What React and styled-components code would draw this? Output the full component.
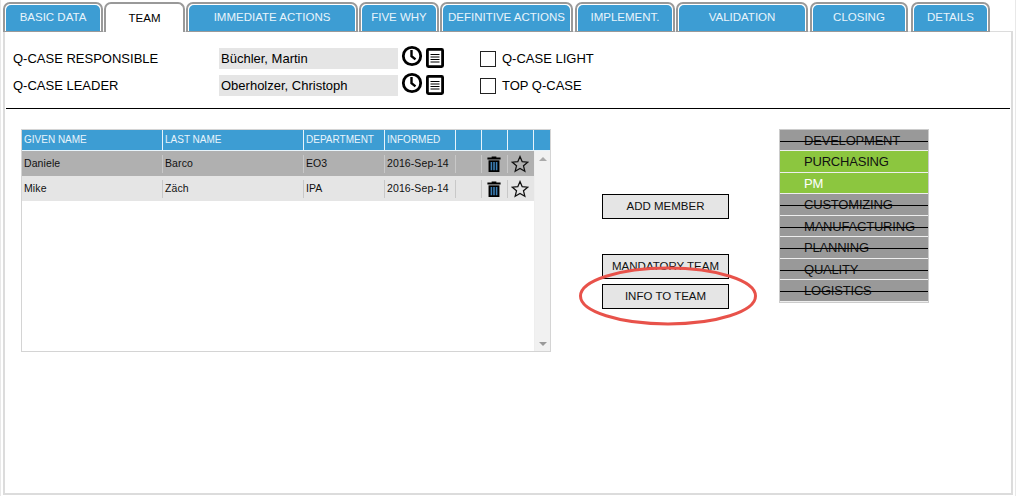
import React from "react";
import styled, { createGlobalStyle } from "styled-components";

const Global = createGlobalStyle`
  html, body { margin: 0; padding: 0; background: #fff; }
  * { box-sizing: border-box; }
  body { font-family: "Liberation Sans", Arial, sans-serif; color: #000; }
`;

const Page = styled.div`
  width: 1016px;
  height: 496px;
  padding: 2px 2px 1px 2px;
  border-left: 1px solid #e8e8e8;
  border-right: 1px solid #e8e8e8;
  display: flex;
  flex-direction: column;
  overflow: hidden;
`;

const TabStrip = styled.div`
  display: flex;
  height: 30px;
  flex: none;
  position: relative;
  z-index: 1;
`;

const Tab = styled.div`
  width: ${(p) => p.$w}px;
  margin-right: ${(p) => p.$gap}px;
  height: 30px;
  border: 2px solid #999;
  border-bottom: ${(p) => (p.$active ? "none" : "1px solid #999")};
  border-radius: 7px 7px 0 0;
  padding: 1px 1px 0;
  background: #fff;
  display: flex;
`;

const TabFace = styled.div`
  flex: 1;
  border-radius: 5px 5px 0 0;
  background: ${(p) => (p.$active ? "#fff" : "#3d9dd3")};
  color: ${(p) => (p.$active ? "#000" : "#e8f4fb")};
  font-size: 11.5px;
  display: flex;
  align-items: center;
  justify-content: center;
  white-space: nowrap;
  padding-bottom: 2px;
`;

const Panel = styled.div`
  flex: 1;
  margin-top: -1px;
  border: 2px solid #dcdcdc;
  border-top: 1px solid #dcdcdc;
  padding: 16px 1px 0 1px;
  display: flex;
  flex-direction: column;
`;

const CaseHeader = styled.div`
  display: flex;
  flex-direction: column;
  gap: 6px;
  padding-left: 7px;
  height: 60px;
`;

const CaseRow = styled.div`
  display: flex;
  align-items: center;
  height: 21px;
`;

const CaseLabel = styled.div`
  width: 206px;
  font-size: 13px;
  white-space: nowrap;
`;

const ReadOnlyField = styled.div`
  width: 179px;
  height: 21px;
  background: #e5e5e5;
  font-size: 13px;
  line-height: 22px;
  padding-left: 2px;
  white-space: nowrap;
`;

const IconSlot = styled.div`
  display: flex;
  align-items: flex-start;
  gap: 3px;
  margin-left: 3px;
  height: 21px;
  margin-top: -6px;
`;

const CheckGroup = styled.div`
  display: flex;
  align-items: center;
  margin-left: 36px;
  font-size: 13px;
  gap: 6px;
  white-space: nowrap;
`;

const CheckBox = styled.span`
  width: 16px;
  height: 16px;
  border: 1px solid #222;
  background: #fff;
  display: block;
`;

const Rule = styled.div`
  height: 1px;
  background: #000;
`;

const Workspace = styled.div`
  display: flex;
  align-items: flex-start;
  padding: 20px 0 0 15px;
`;

const TableBox = styled.div`
  width: 530px;
  height: 223px;
  border: 1px solid #d4d4d4;
  display: flex;
  flex-direction: column;
  font-size: 10.5px;
`;

const HeadRow = styled.div`
  display: grid;
  grid-template-columns: 141px 141px 81px 71px 26px 26px 26px 1fr;
  height: 21px;
  background: #3d9dd3;
  border-bottom: 1px solid #e8f4fb;
  flex: none;
`;

const HeadCell = styled.div`
  color: #e8f4fb;
  font-size: 10px;
  line-height: 19px;
  padding-left: 2px;
  border-right: 1px solid #e8f4fb;
  white-space: nowrap;
  &:last-child { border-right: none; }
`;

const TableBody = styled.div`
  flex: 1;
  display: flex;
`;

const Rows = styled.div`
  flex: 1;
  display: flex;
  flex-direction: column;
`;

const DataRow = styled.div`
  display: grid;
  grid-template-columns: 141px 141px 81px 71px 26px 26px 26px;
  height: 25px;
  background: ${(p) => (p.$selected ? "#b0b0b0" : "#e5e5e5")};
  align-items: center;
`;

const DataCell = styled.div`
  height: 18px;
  padding: ${(p) => (p.$icon ? "0 1px 0 0" : "0 0 1px 2px")};
  border-right: 1px solid #c8c8c8;
  color: #111;
  letter-spacing: 0.1px;
  white-space: nowrap;
  display: flex;
  align-items: center;
  justify-content: ${(p) => (p.$icon ? "center" : "flex-start")};
  &:last-child { border-right: none; padding-right: 3px; }
`;

const ScrollTrack = styled.div`
  width: 16px;
  background: #f1f1f1;
  border-left: 1px solid #eee;
  display: flex;
  flex-direction: column;
  justify-content: space-between;
  align-items: center;
  padding: 6px 0 5px;
`;

const ScrollArrow = styled.span`
  width: 0;
  height: 0;
  border-left: 4px solid transparent;
  border-right: 4px solid transparent;
  ${(p) => (p.$down ? "border-top: 4px solid #999;" : "border-bottom: 4px solid #aaa;")}
`;

const Actions = styled.div`
  width: 127px;
  margin-left: 51px;
  margin-top: 65px;
  display: flex;
  flex-direction: column;
  position: relative;
`;

const ActionButton = styled.button`
  width: 127px;
  height: 25px;
  margin-top: ${(p) => p.$top || 0}px;
  padding: 0 0 1px;
  border: 1px solid #000;
  border-radius: 0;
  background: #e5e5e5;
  color: #111;
  font: 11.5px "Liberation Sans", Arial, sans-serif;
  white-space: nowrap;
`;

const Highlight = styled.svg`
  position: absolute;
  left: -24px;
  top: 71px;
  pointer-events: none;
`;

const FunctionList = styled.div`
  width: 150px;
  height: 174px;
  margin-left: 50px;
  border: 1px solid #ccc;
  background: #eee;
  display: grid;
  grid-template-rows: repeat(8, 1fr);
  gap: 1px;
  padding-bottom: 1.5px;
`;

const FunctionItem = styled.div`
  position: relative;
  min-height: 0;
  background: ${(p) => (p.$on ? "#8cc63f" : "#999")};
  color: ${(p) => (p.$white ? "#fff" : "#111")};
  font-size: 13px;
  letter-spacing: -0.2px;
  line-height: 21px;
  padding-left: 24px;
  white-space: nowrap;
  ${(p) =>
    p.$off
      ? `&::after { content: ""; position: absolute; left: 0; right: 0; top: 11px; height: 1px; background: #000; }`
      : ""}
`;

const Clock = () => (
  <svg width="22" height="22" viewBox="0 0 22 22">
    <circle cx="11" cy="11" r="8.7" fill="#fff" stroke="#000" strokeWidth="2.8" />
    <path d="M10.5 5v6.2l4 3.2" fill="none" stroke="#000" strokeWidth="2.4" />
  </svg>
);

const Doc = () => (
  <svg width="18" height="20" viewBox="0 0 18 20" style={{ marginTop: 3 }}>
    <rect x="1.4" y="1.4" width="15.2" height="17.2" rx="1" fill="#fff" stroke="#000" strokeWidth="2.8" />
    <path d="M4.5 6.5h9M4.5 9h9M4.5 11.5h9M4.5 14h9" stroke="#000" strokeWidth="1.2" />
  </svg>
);

const Trash = () => (
  <svg width="14" height="16" viewBox="0 0 14 17">
    <path d="M4.5 1.6V.4h5v1.2H14v2.2H0V1.6z" fill="#000" />
    <path d="M1.2 4.6h11.6V17H1.2z" fill="#000" />
    <path d="M3.4 6.4h1.7v8.8H3.4zM6.15 6.4h1.7v8.8h-1.7zM8.9 6.4h1.7v8.8H8.9z" fill="#3d7fb5" />
  </svg>
);

const Star = () => (
  <svg width="18" height="18" viewBox="0 0 18 18">
    <path d="M9 1.6l2.2 5.1 5.5.5-4.2 3.6 1.3 5.4L9 13.4l-4.8 2.8 1.3-5.4L1.3 7.2l5.5-.5z" fill="none" stroke="#111" strokeWidth="1.3" />
  </svg>
);

const tabs = [
  ["BASIC DATA", 100, 1],
  ["TEAM", 81, 1, true],
  ["IMMEDIATE ACTIONS", 172, 1],
  ["FIVE WHY", 80, 1],
  ["DEFINITIVE ACTIONS", 133, 2],
  ["IMPLEMENT.", 100, 1],
  ["VALIDATION", 132, 2],
  ["CLOSING", 98, 3],
  ["DETAILS", 79, 0],
];

const heads = ["GIVEN NAME", "LAST NAME", "DEPARTMENT", "INFORMED", "", "", "", ""];
const people = [
  { given: "Daniele", last: "Barco", dept: "EO3", date: "2016-Sep-14", selected: true },
  { given: "Mike", last: "Zäch", dept: "IPA", date: "2016-Sep-14" },
];
const functions = [
  { name: "DEVELOPMENT", off: true },
  { name: "PURCHASING", on: true },
  { name: "PM", on: true, white: true },
  { name: "CUSTOMIZING", off: true },
  { name: "MANUFACTURING", off: true },
  { name: "PLANNING", off: true },
  { name: "QUALITY", off: true },
  { name: "LOGISTICS", off: true },
];

export default function App() {
  return (
    <Page>
      <Global />
      <TabStrip>
        {tabs.map(([label, w, gap, active]) => (
          <Tab key={label} $w={w} $gap={gap} $active={active}>
            <TabFace $active={active}>{label}</TabFace>
          </Tab>
        ))}
      </TabStrip>
      <Panel>
        <CaseHeader>
          <CaseRow>
            <CaseLabel>Q-CASE RESPONSIBLE</CaseLabel>
            <ReadOnlyField>Büchler, Martin</ReadOnlyField>
            <IconSlot><Clock /><Doc /></IconSlot>
            <CheckGroup><CheckBox />Q-CASE LIGHT</CheckGroup>
          </CaseRow>
          <CaseRow>
            <CaseLabel>Q-CASE LEADER</CaseLabel>
            <ReadOnlyField>Oberholzer, Christoph</ReadOnlyField>
            <IconSlot><Clock /><Doc /></IconSlot>
            <CheckGroup><CheckBox />TOP Q-CASE</CheckGroup>
          </CaseRow>
        </CaseHeader>
        <Rule />
        <Workspace>
          <TableBox>
            <HeadRow>
              {heads.map((h, i) => <HeadCell key={i}>{h}</HeadCell>)}
            </HeadRow>
            <TableBody>
              <Rows>
                {people.map((p) => (
                  <DataRow key={p.given} $selected={p.selected}>
                    <DataCell>{p.given}</DataCell>
                    <DataCell>{p.last}</DataCell>
                    <DataCell>{p.dept}</DataCell>
                    <DataCell>{p.date}</DataCell>
                    <DataCell />
                    <DataCell $icon><Trash /></DataCell>
                    <DataCell $icon><Star /></DataCell>
                  </DataRow>
                ))}
              </Rows>
              <ScrollTrack>
                <ScrollArrow />
                <ScrollArrow $down />
              </ScrollTrack>
            </TableBody>
          </TableBox>
          <Actions>
            <ActionButton>ADD MEMBER</ActionButton>
            <ActionButton $top={35}>MANDATORY TEAM</ActionButton>
            <ActionButton $top={5}>INFO TO TEAM</ActionButton>
            <Highlight width="180" height="62" viewBox="0 0 180 62">
              <ellipse cx="90" cy="31" rx="87.5" ry="28" fill="none" stroke="#e8524a" strokeWidth="3" />
            </Highlight>
          </Actions>
          <FunctionList>
            {functions.map((f) => (
              <FunctionItem key={f.name} $on={f.on} $white={f.white} $off={f.off}>{f.name}</FunctionItem>
            ))}
          </FunctionList>
        </Workspace>
      </Panel>
    </Page>
  );
}
